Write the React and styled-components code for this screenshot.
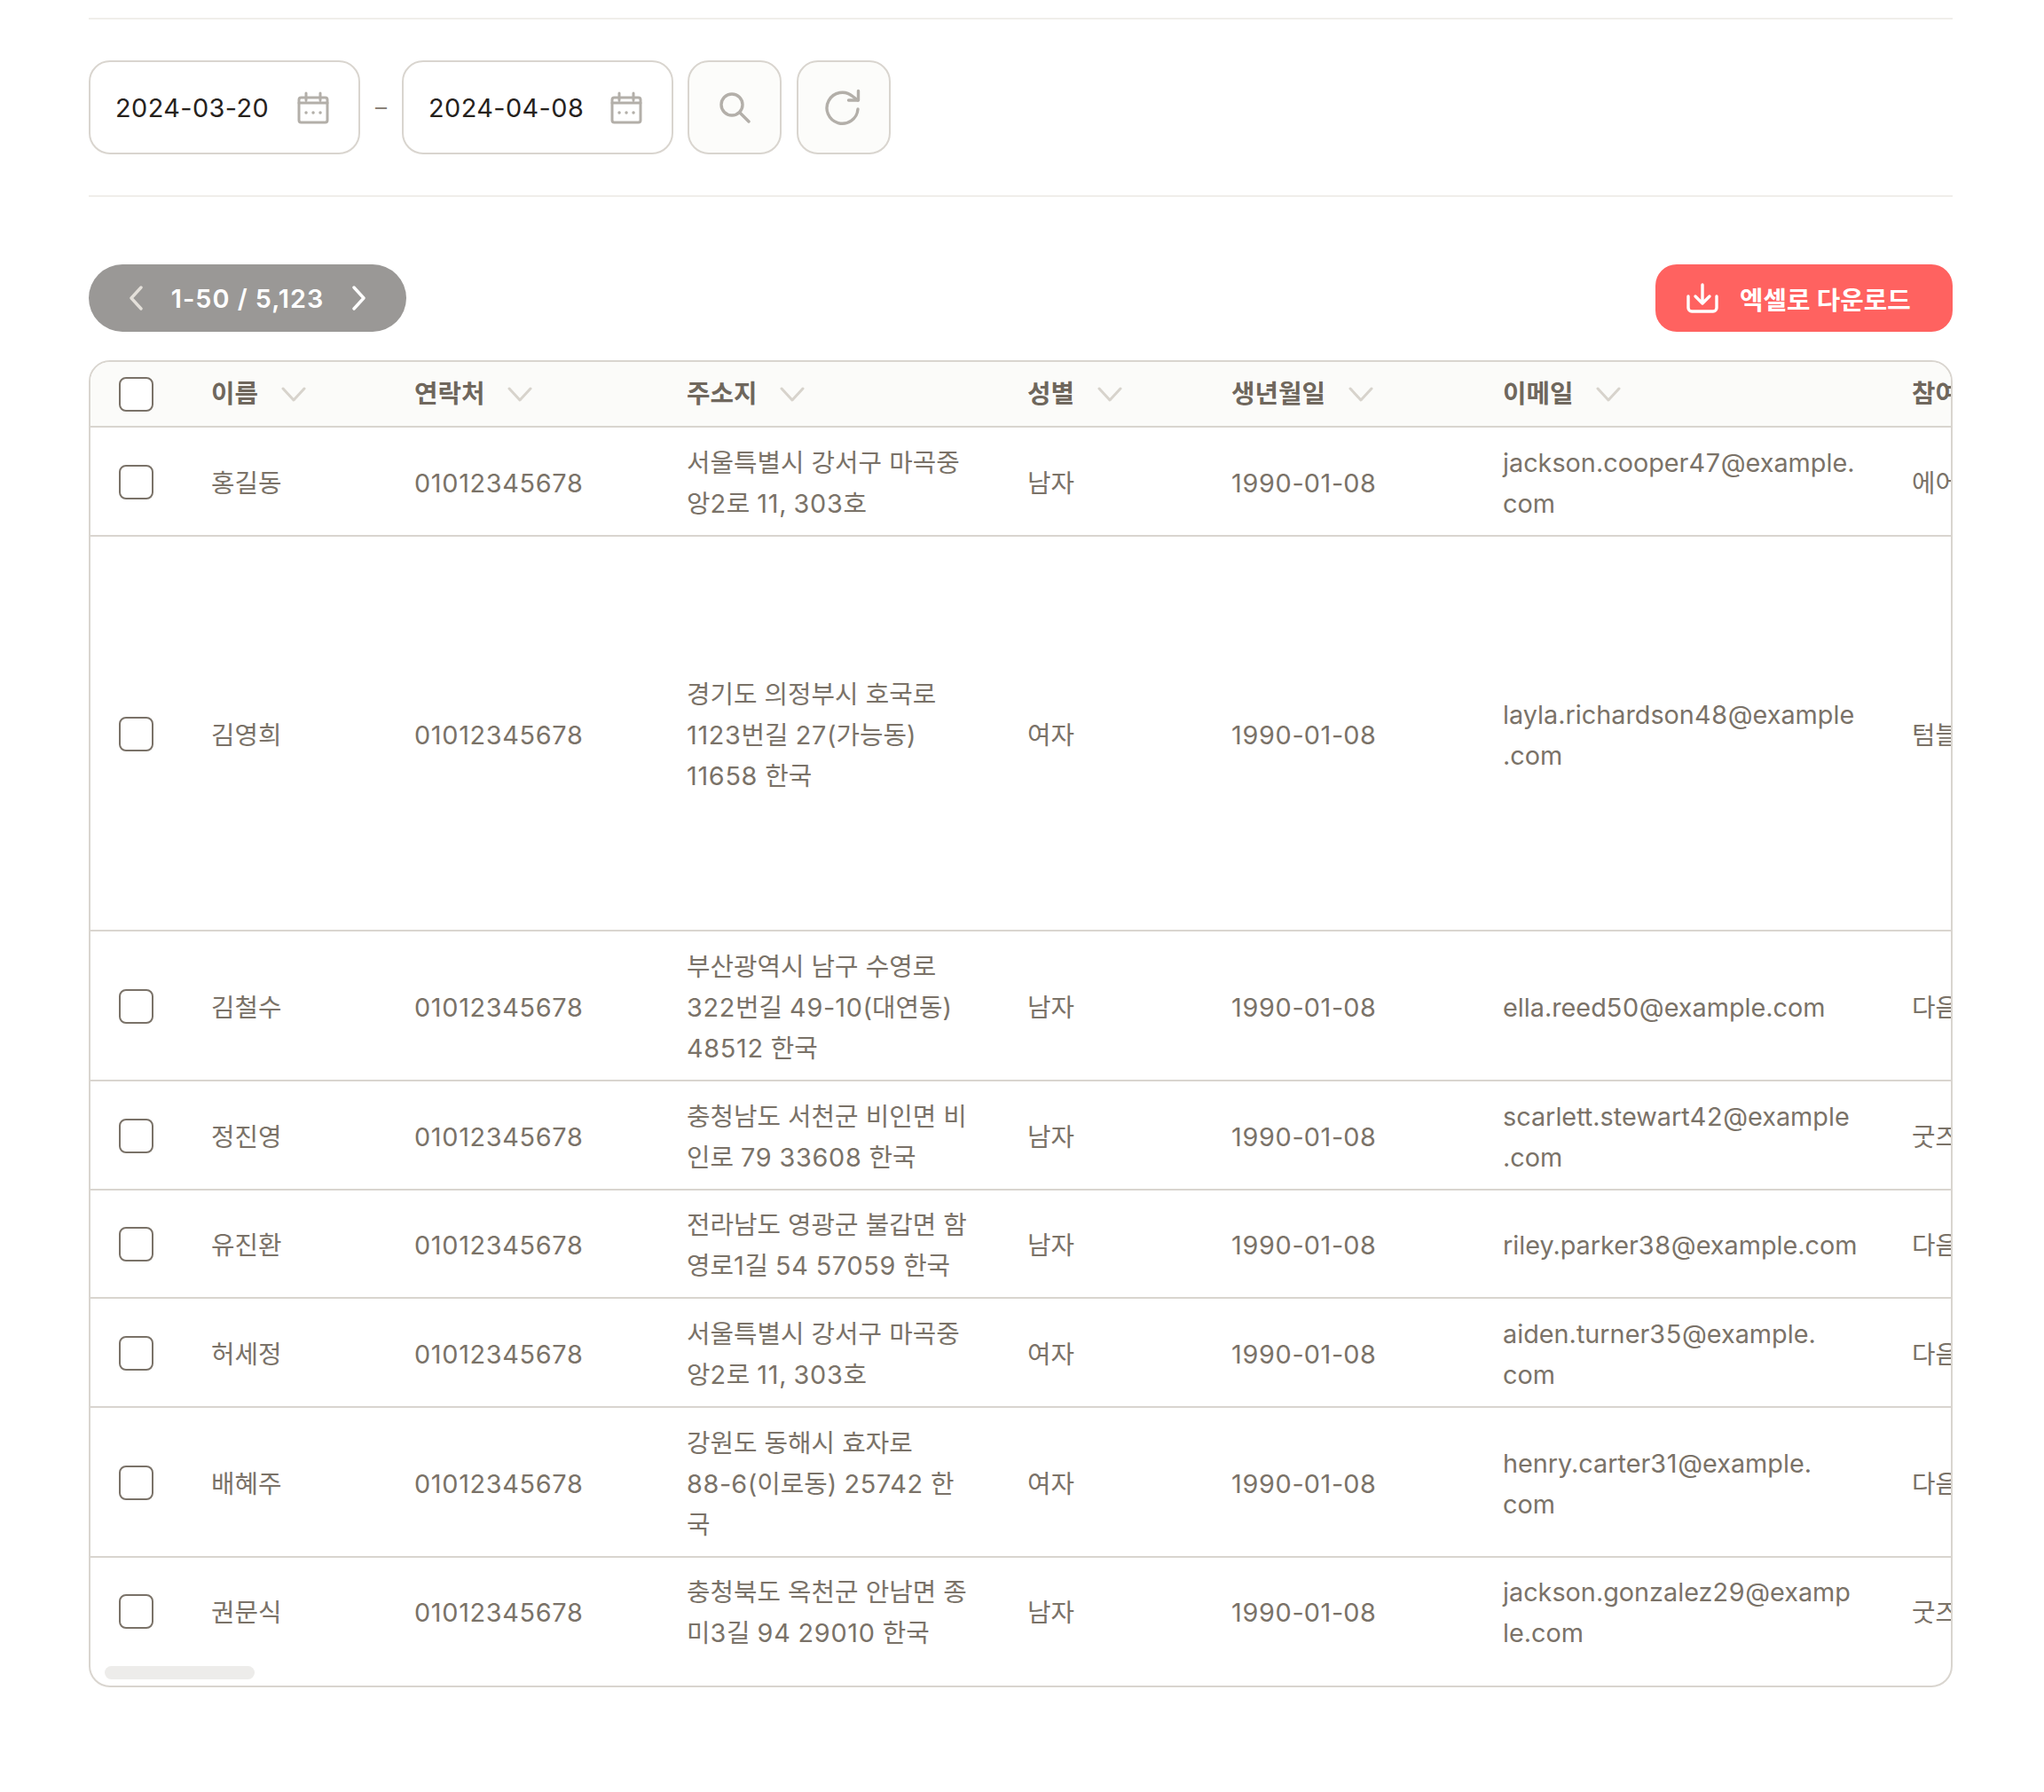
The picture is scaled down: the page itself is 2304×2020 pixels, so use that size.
import React from "react";
import styled, { createGlobalStyle } from "styled-components";

const Global = createGlobalStyle`
  html, body { margin: 0; padding: 0; background: #fff; }
  body {
    font-family: Inter, "Noto Sans CJK KR", "Noto Sans", sans-serif;
  }
  * { box-sizing: border-box; }
`;

const Page = styled.main`
  width: 2304px;
  min-height: 2020px;
  padding: 20px 103px 0 100px;
  background: #fff;
`;

const FilterBar = styled.section`
  display: flex;
  align-items: center;
  padding: 46px 0;
  border-top: 2px solid #f0eeea;
  border-bottom: 2px solid #f0eeea;
`;

const DateField = styled.div`
  width: 306px;
  height: 106px;
  display: flex;
  align-items: center;
  justify-content: space-between;
  padding: 0 33px 0 28px;
  border: 2px solid #d9d5cf;
  border-radius: 24px;
  background: #fff;
  color: #26221d;
  font-size: 28.8px;
  line-height: 1;
`;

const DateText = styled.span`
  padding-top: 2px;
  letter-spacing: 0.45px;
`;

const Dash = styled.span`
  width: 47px;
  text-align: center;
  color: #8a8278;
  font-size: 26px;
  line-height: 1;
`;

const IconButton = styled.button`
  width: 106px;
  height: 106px;
  margin-left: ${(p) => p.$gap}px;
  padding: 0;
  display: flex;
  align-items: center;
  justify-content: center;
  border: 2px solid #d9d5cf;
  border-radius: 24px;
  background: #fcfcfa;
`;

const ActionRow = styled.section`
  display: flex;
  align-items: center;
  justify-content: space-between;
  margin-top: 76px;
  margin-bottom: 32px;
`;

const Pager = styled.div`
  width: 358px;
  height: 76px;
  display: flex;
  align-items: center;
  justify-content: space-between;
  padding: 0 45px;
  border-radius: 38px;
  background: #9a9896;
  color: #fff;
  font-size: 28.8px;
  font-weight: 600;
  letter-spacing: 1px;
`;

const DownloadButton = styled.button`
  width: 335px;
  height: 76px;
  display: flex;
  align-items: center;
  gap: 24px;
  padding: 0 0 0 35px;
  border: 0;
  border-radius: 24px;
  background: #ff6260;
  color: #fff;
  font-family: inherit;
  font-size: 28.8px;
  font-weight: 600;
`;

const TableCard = styled.section`
  border: 2px solid #d9d5cf;
  border-radius: 24px;
  overflow: hidden;
  background: #fff;
`;

const Table = styled.table`
  width: 2423px;
  table-layout: fixed;
  border-collapse: separate;
  border-spacing: 0;
`;

const HeadCell = styled.th`
  height: 74px;
  padding: 0 30px;
  background: #fbfbf9;
  border-bottom: 2px solid #d9d5cf;
  color: #6f675d;
  font-size: 28.8px;
  font-weight: 600;
  line-height: 46px;
  text-align: left;
  white-space: nowrap;
`;

const HeadInner = styled.span`
  display: flex;
  align-items: center;
  gap: 26px;
`;

const Row = styled.tr`
  height: ${(p) => p.$height}px;
`;

const Cell = styled.td`
  padding: 4px 31px 0 30px;
  border-bottom: ${(p) => (p.$last ? 0 : "2px solid #d9d5cf")};
  color: #7a7268;
  font-size: 28.8px;
  font-weight: 400;
  line-height: 46px;
  vertical-align: middle;
  overflow-wrap: anywhere;
`;

const Digits = styled.span`
  letter-spacing: 0.7px;
`;

const CheckCell = styled(Cell)`
  padding: 1px 0 0 32px;
`;

const HeadCheckCell = styled(HeadCell)`
  padding: 0 0 0 32px;
`;

const Checkbox = styled.span`
  display: block;
  width: 39px;
  height: 39px;
  border: 2px solid #7a7268;
  border-radius: 8px;
  background: #fff;
`;

const ScrollTrack = styled.div`
  height: 24px;
  padding: 2px 16px 0;
`;

const ScrollThumb = styled.div`
  width: 169px;
  height: 15px;
  border-radius: 8px;
  background: #edecea;
`;

const CalendarIcon = () => (
  <svg width="36" height="37" viewBox="0 0 36 37" fill="none" stroke="#b3afa9" strokeWidth="3" strokeLinecap="round" strokeLinejoin="round">
    <rect x="2" y="7" width="32" height="28" rx="2.5" />
    <path d="M2 13h32M10 2v8M26 2v8" />
    <path d="M10 24h.1M18 24h.1M26 24h.1" strokeWidth="3.4" />
  </svg>
);

const SearchIcon = () => (
  <svg width="36" height="36" viewBox="0 0 36 36" fill="none" stroke="#b3afa9" strokeWidth="3.4" strokeLinecap="round">
    <circle cx="15" cy="15" r="12" />
    <path d="M24 24l10 10" />
  </svg>
);

const RefreshIcon = () => (
  <svg width="42" height="42" viewBox="0 0 42 42" fill="none" stroke="#b3afa9" strokeWidth="3.4" strokeLinecap="round" strokeLinejoin="round">
    <path d="M37 23a17.500 17.500 0 1 1-6-14.500L37 13" />
    <path d="M37.500 2.500V13H26.500" />
  </svg>
);

const Chevron = ({ dir, color }) => (
  <svg width="17" height="28" viewBox="0 0 17 28" fill="none" stroke={color} strokeWidth="3.4" strokeLinecap="round" strokeLinejoin="round">
    <path d={dir === "left" ? "M14 2L3 14l11 12" : "M3 2l11 12L3 26"} />
  </svg>
);

const SortIcon = () => (
  <svg width="28" height="17" viewBox="0 0 28 17" fill="none" stroke="#d7d3cc" strokeWidth="3" strokeLinecap="round" strokeLinejoin="round">
    <path d="M2 2l12 13L26 2" />
  </svg>
);

const DownloadIcon = () => (
  <svg width="36" height="34" viewBox="0 0 36 34" fill="none" stroke="#fff" strokeWidth="3.4" strokeLinecap="round" strokeLinejoin="round">
    <path d="M2 15v13a4 4 0 0 0 4 4h24a4 4 0 0 0 4-4V15" />
    <path d="M18 2v21M10 15l8 8 8-8" />
  </svg>
);

const columns = [
  { label: "이름", width: 229 },
  { label: "연락처", width: 307 },
  { label: "주소지", width: 384 },
  { label: "성별", width: 230 },
  { label: "생년월일", width: 306 },
  { label: "이메일", width: 461 },
  { label: "참여 상품", width: 400, plain: true },
];

const ZW = "\u200B";
const WJ = "\u2060";

const rows = [
  { h: 123, name: "홍길동", addr: "서울특별시 강서구 마곡중앙2로 11, 303호", g: "남자", mail: `jackson.cooper47@example.${ZW}com`, item: "에어팟" },
  { h: 445, name: "김영희", addr: "경기도 의정부시 호국로 1123번길 27(가능동) 11658 한국", g: "여자", mail: `layla.richardson48@example${ZW}.com`, item: "텀블러" },
  { h: 169, name: "김철수", addr: "부산광역시 남구 수영로 322번길 49-10(대연동) 48512 한국", g: "남자", mail: "ella.reed50@example.com", item: "다음 기회에" },
  { h: 123, name: "정진영", addr: "충청남도 서천군 비인면 비인로 79 33608 한국", g: "남자", mail: `scarlett.stewart42@example${ZW}.com`, item: "굿즈" },
  { h: 122, name: "유진환", addr: "전라남도 영광군 불갑면 함영로1길 54 57059 한국", g: "남자", mail: "riley.parker38@example.com", item: "다음 기회에" },
  { h: 123, name: "허세정", addr: "서울특별시 강서구 마곡중앙2로 11, 303호", g: "여자", mail: `aiden.turner35@example.${ZW}com`, item: "다음 기회에" },
  { h: 169, name: "배혜주", addr: `강원도 동해시 효자로 88-${WJ}6(이로동) 25742 한국`, g: "여자", mail: `henry.carter31@example.${ZW}com`, item: "다음 기회에" },
  { h: 120, name: "권문식", addr: "충청북도 옥천군 안남면 종미3길 94 29010 한국", g: "남자", mail: `jackson.gonzalez29@examp${ZW}le.com`, item: "굿즈" },
];

const Spaced = ({ text }) =>
  text.split(/(\d+)/).map((part, i) =>
    i % 2 ? <Digits key={i}>{part}</Digits> : part
  );

export default function App() {
  return (
    <Page>
      <Global />
      <FilterBar>
        <DateField><DateText>2024-03-20</DateText><CalendarIcon /></DateField>
        <Dash>–</Dash>
        <DateField><DateText>2024-04-08</DateText><CalendarIcon /></DateField>
        <IconButton $gap={16} aria-label="검색"><SearchIcon /></IconButton>
        <IconButton $gap={17} aria-label="새로고침"><RefreshIcon /></IconButton>
      </FilterBar>

      <ActionRow>
        <Pager>
          <Chevron dir="left" color="#e4e0da" />
          <span>1-50 / 5,123</span>
          <Chevron dir="right" color="#ffffff" />
        </Pager>
        <DownloadButton><DownloadIcon />엑셀로 다운로드</DownloadButton>
      </ActionRow>

      <TableCard>
        <Table>
          <colgroup>
            <col style={{ width: 106 }} />
            {columns.map((c) => <col key={c.label} style={{ width: c.width }} />)}
          </colgroup>
          <thead>
            <tr>
              <HeadCheckCell><Checkbox /></HeadCheckCell>
              {columns.map((c) => (
                <HeadCell key={c.label}>
                  <HeadInner>{c.label}{!c.plain && <SortIcon />}</HeadInner>
                </HeadCell>
              ))}
            </tr>
          </thead>
          <tbody>
            {rows.map((r, i) => {
              const last = i === rows.length - 1;
              return (
                <Row key={r.name} $height={r.h}>
                  <CheckCell $last={last}><Checkbox /></CheckCell>
                  <Cell $last={last}>{r.name}</Cell>
                  <Cell $last={last}><Spaced text="01012345678" /></Cell>
                  <Cell $last={last}><Spaced text={r.addr} /></Cell>
                  <Cell $last={last}>{r.g}</Cell>
                  <Cell $last={last}><Spaced text="1990-01-08" /></Cell>
                  <Cell $last={last}><Spaced text={r.mail} /></Cell>
                  <Cell $last={last}>{r.item}</Cell>
                </Row>
              );
            })}
          </tbody>
        </Table>
        <ScrollTrack><ScrollThumb /></ScrollTrack>
      </TableCard>
    </Page>
  );
}
